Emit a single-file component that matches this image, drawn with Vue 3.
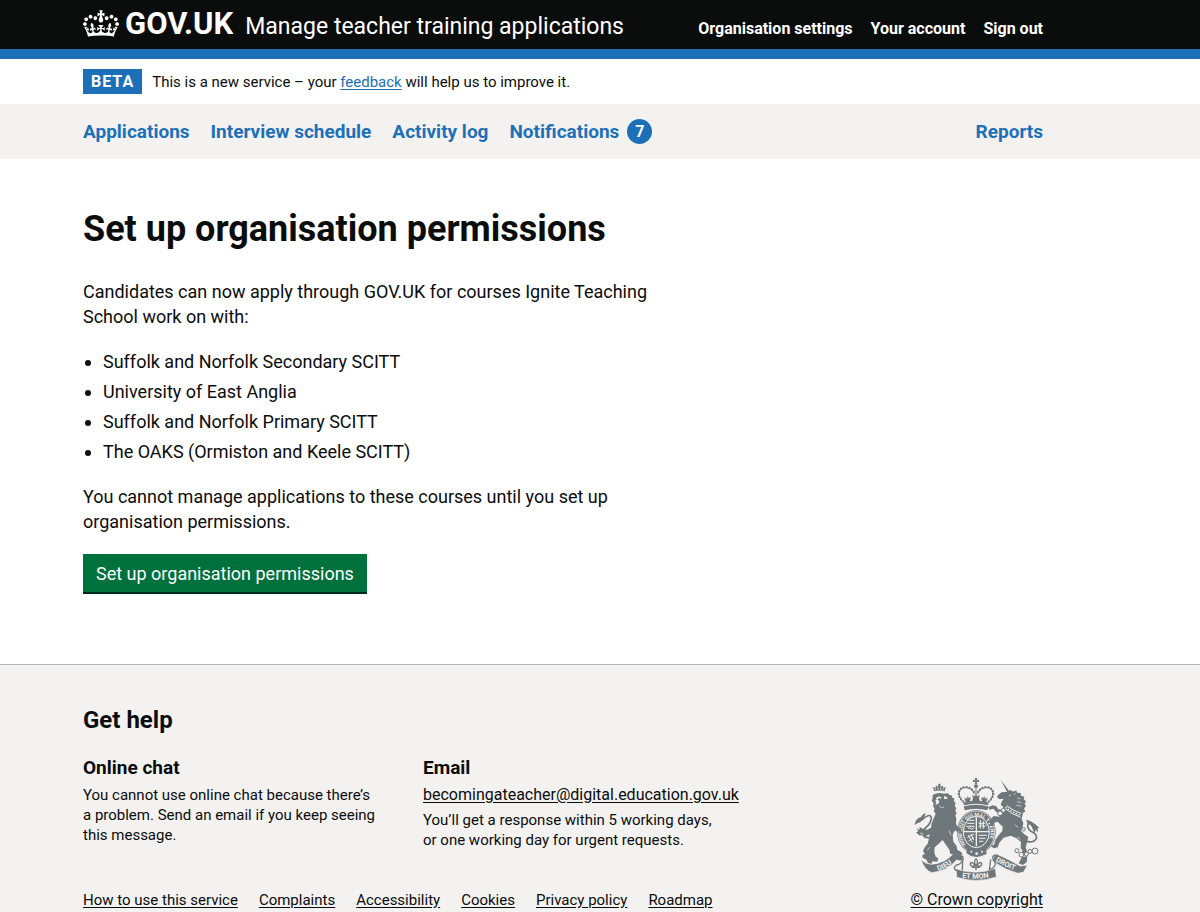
<script setup>
const accountLinks = ['Organisation settings', 'Your account', 'Sign out']
const navLinks = ['Applications', 'Interview schedule', 'Activity log']
const providers = [
  'Suffolk and Norfolk Secondary SCITT',
  'University of East Anglia',
  'Suffolk and Norfolk Primary SCITT',
  'The OAKS (Ormiston and Keele SCITT)'
]
const footerLinks = ['How to use this service', 'Complaints', 'Accessibility', 'Cookies', 'Privacy policy', 'Roadmap']
</script>

<template>
  <header class="header">
    <div class="container header-row">
      <a href="#" class="logo">
        <svg class="crown" viewBox="0 0 132 97" width="36" height="27" aria-hidden="true">
          <path fill="currentColor" fill-rule="evenodd" d="M25 30.2c3.5 1.5 7.7-.2 9.1-3.7 1.5-3.6-.2-7.8-3.9-9.2-3.6-1.4-7.6.3-9.1 3.9-1.4 3.5.3 7.5 3.9 9zM9 39.5c3.6 1.5 7.8-.2 9.2-3.7 1.5-3.6-.2-7.8-3.9-9.1-3.6-1.5-7.6.2-9.1 3.8-1.4 3.5.3 7.5 3.8 9zM4.4 57.2c3.5 1.5 7.7-.2 9.1-3.8 1.5-3.6-.2-7.7-3.9-9.1-3.5-1.5-7.6.3-9.1 3.8-1.4 3.5.3 7.6 3.9 9.1zm38.3-21.4c3.5 1.5 7.7-.2 9.1-3.8 1.5-3.6-.2-7.7-3.9-9.1-3.6-1.5-7.6.3-9.1 3.8-1.3 3.6.4 7.7 3.9 9.1zm64.4-5.6c-3.6 1.5-7.8-.2-9.1-3.7-1.5-3.6.2-7.8 3.8-9.2 3.6-1.4 7.7.3 9.2 3.9 1.3 3.5-.4 7.5-3.9 9zm15.9 9.3c-3.6 1.5-7.7-.2-9.1-3.7-1.5-3.6.2-7.8 3.7-9.1 3.6-1.5 7.7.2 9.2 3.8 1.5 3.5-.3 7.5-3.8 9zm4.7 17.7c-3.6 1.5-7.8-.2-9.2-3.8-1.5-3.6.2-7.7 3.9-9.1 3.6-1.5 7.7.3 9.2 3.8 1.3 3.5-.4 7.6-3.9 9.1zM89.3 35.8c-3.6 1.5-7.8-.2-9.2-3.8-1.4-3.6.2-7.7 3.9-9.1 3.6-1.5 7.7.3 9.2 3.8 1.4 3.6-.3 7.7-3.9 9.1zM69.7 17.7l8.9 4.7V9.3l-8.9 2.8c-.2-.3-.5-.6-.9-.9L72.4 0H59.6l3.5 11.2c-.3.3-.6.5-.9.9l-8.8-2.8v13.1l8.8-4.7c.3.3.6.7.9.9l-5 15.4v.1c-.2.8-.4 1.6-.4 2.4 0 4.1 3.1 7.5 7 8.1h.2c.3 0 .7.1 1 .1.4 0 .7 0 1-.1h.2c4-.6 7.1-4.1 7.1-8.1 0-.8-.1-1.7-.4-2.4V34l-5.1-15.4c.4-.2.7-.6 1-.9zM66 92.8c16.9 0 32.8 1.1 47.1 3.2 4-16.9 8.9-26.7 14-33.5l-9.6-3.4c1 4.9 1.1 7.2 0 10.2-1.5-1.4-3-4.3-4.2-8.7L108.6 76c2.8-2 5-3.2 7.5-3.3-4.4 9.4-10 11.9-13.6 11.2-4.3-.8-6.3-4.6-5.6-7.9 1-4.7 5.7-5.9 8-.5 4.3-8.7-3-11.4-7.6-8.8 7.1-7.2 7.9-13.5 2.1-21.1-8 6.1-8.1 12.3-4.5 20.8-4.7-5.4-12.1-2.5-9.5 6.2 3.4-5.2 7.9-2 7.2 3.1-.6 4.3-6.4 7.8-13.5 7.2-10.3-.9-10.9-8-11.2-13.8 2.5-.5 7.1 1.8 11 7.3L80.2 60c-4.1 4.4-8 5.3-12.3 5.4 1.4-4.4 8-11.6 8-11.6H55.5s6.4 7.2 7.9 11.6c-4.2-.1-8-1-12.3-5.4l1.4 16.4c3.9-5.5 8.5-7.7 10.9-7.3-.3 5.8-.9 12.8-11.1 13.8-7.2.6-12.9-2.9-13.5-7.2-.7-5 3.8-8.3 7.1-3.1 2.7-8.7-4.6-11.6-9.4-6.2 3.7-8.5 3.6-14.7-4.6-20.8-5.8 7.6-5 13.9 2.2 21.1-4.7-2.6-11.9.1-7.7 8.8 2.3-5.5 7.1-4.2 8.1.5.7 3.3-1.3 7.1-5.7 7.9-3.5.7-9-1.8-13.5-11.2 2.5.1 4.7 1.3 7.5 3.3l-4.7-15.4c-1.2 4.4-2.7 7.2-4.3 8.7-1.1-3-.9-5.3 0-10.2l-9.5 3.4c5 6.9 9.9 16.7 14 33.5 14.8-2.1 30.8-3.2 47.7-3.2z" />
        </svg>
        <span>GOV.UK</span>
      </a>
      <a href="#" class="service">Manage teacher training applications</a>
      <nav class="account" aria-label="Account">
        <a v-for="l in accountLinks" :key="l" href="#">{{ l }}</a>
      </nav>
    </div>
  </header>

  <div class="phase">
    <div class="container phase-row">
      <strong class="tag">BETA</strong>
      <span>This is a new service – your <a href="#">feedback</a> will help us to improve it.</span>
    </div>
  </div>

  <nav class="primary" aria-label="Primary">
    <div class="container primary-row">
      <a v-for="l in navLinks" :key="l" href="#">{{ l }}</a>
      <a href="#" class="notify">Notifications <span class="badge">7</span></a>
      <a href="#" class="reports">Reports</a>
    </div>
  </nav>

  <main class="main">
    <div class="container">
      <div class="content">
        <h1>Set up organisation permissions</h1>
        <p>Candidates can now apply through GOV.UK for courses Ignite Teaching School work on with:</p>
        <ul>
          <li v-for="p in providers" :key="p">{{ p }}</li>
        </ul>
        <p>You cannot manage applications to these courses until you set up organisation permissions.</p>
        <button type="button" class="button">Set up organisation permissions</button>
      </div>
    </div>
  </main>

  <footer class="footer">
    <div class="container footer-row">
      <div>
        <h2>Get help</h2>
        <div class="help">
          <section>
            <h3>Online chat</h3>
            <p>You cannot use online chat because there’s a problem. Send an email if you keep seeing this message.</p>
          </section>
          <section>
            <h3>Email</h3>
            <p><a href="#" class="email">becomingateacher@digital.education.gov.uk</a></p>
            <p>You’ll get a response within 5 working days, or one working day for urgent requests.</p>
          </section>
        </div>
        <nav class="meta" aria-label="Support links">
          <a v-for="l in footerLinks" :key="l" href="#">{{ l }}</a>
        </nav>
      </div>
      <a href="#" class="copyright">
        <svg class="crest" viewBox="42 36 378 312" width="126" height="104" aria-hidden="true">
          <!-- imperial crown -->
          <g class="fill">
            <path d="M224 39h8l-2 7 7-2v8l-7-2 2 8h-8l2-8-7 2v-8l7 2z" />
            <circle cx="228" cy="64" r="6" />
            <path d="M190 113q38-12 76 0l-2 8q-36-10-72 0zM191 124q37-9 74 0l-3 12q-34-10-68 0z" />
            <path d="M228 86l4 8 8-4-3 10 3 9h-24l3-9-3-10 8 4zM203 92l3 7 7-2-4 13-12 2-4-14 8 3zM253 92l-3 7-7-2 4 13 12 2 4-14-8 3z" />
          </g>
          <path class="line" stroke-width="3" d="M192 112C166 88 180 66 199 68q18 2 25 20M264 112C290 88 276 66 257 68q-18 2-25 20M228 70v17" />
          <path class="dots" d="M190 110C164 88 178 64 199 66q18 2 25 20M266 110C292 88 278 64 257 66q-18 2-25 20" />

          <!-- garter and shield -->
          <ellipse class="fill" cx="229" cy="201" rx="58" ry="66" />
          <ellipse class="light-line" cx="229" cy="201" rx="55" ry="63" stroke-width="2" />
          <ellipse class="light-line" cx="229" cy="201" rx="39" ry="47" stroke-width="3" />
          <path id="garter" fill="none" d="M198 240A43 51 0 1 1 260 240" />
          <text class="garter"><textPath href="#garter" startOffset="2">HONI SOIT QUI MAL Y PENSE</textPath></text>
          <path class="light-line" stroke-width="4" d="M229 157v87M191 200h76" />
          <path class="light-line" stroke-width="3" d="M202 175h21M199 184h24M207 166h16M204 191l5-3 6 5 7-5M236 175h20M236 185l8-5 8 6 8-7M241 165v26M250 168v23M236 211h24M237 220h20M237 229h13M205 210l12 22M213 207l8 18M222 207l-20 10M221 217l-15 11" />
          <path class="fill" d="M202 244l27 18 28-17 3 22-18 7-13 2-16-3-14-9z" />
          <circle class="light" cx="214" cy="260" r="3" />
          <circle class="light" cx="230" cy="266" r="4" />
          <circle class="light" cx="246" cy="260" r="3" />

          <!-- motto ribbon -->
          <g class="ribbon">
            <path d="M63 283q12 14 30 15 40-2 67-32 22-2 32 9l-7 14-15-4q-29 34-75 38-22-8-32-40z" />
            <path d="M288 266q42 18 72 37l22-2-11 20-17 4q-38-10-78-38z" />
            <path d="M169 312q59 20 117-2l3 26q-59 20-119 1z" />
          </g>

          <!-- lion -->
          <g class="fill">
            <path d="M103 79l-5-13 8 3 2-7 6 3 1-9h6l1 9 7-3 1 7 7-4-3 14q-15-5-31 0z" />
            <path d="M98 90q16-9 34-4l12-1 4 5 7 1 1 6 7 4-1 8 5 6-3 7 5 8-3 7 4 8-4 6 3 10-1 17 9 10 6 3 1 12-8-6-4 5-6-6-5 6-3 8 2 20 10 13 2 12 11 5 5 9-22 1-15-4-3-12-10-14-10-15-10 10-14 12-1 15 4 13 8 5-3 10-15-1-2 7-11-2-6-11-10-4-1-9 8-3-6-8 4-11 10-12 4-16 2-12-12 5-18-1-11-10 7-3-5-9 10 4-2-9 11 7 12 2 12-6 2-14 12-28-6-8 3-7-5-8 2-8-6-8 3-7z" />
            <path d="M44 180q2-20 19-24 4-9 14-12-2 12-9 18l-7 10q-9 2-17 8z" />
          </g>
          <path class="line" stroke-width="5" d="M64 166q30-27 30-4-4 17-18 27-16 13-5 24 8 7 22 4" />
          <path class="light" d="M108 98l9-4 8 4-3 3-5-2-4 4 5 6-3 7-9 4 3-8-4-5 5-2zM133 93l7 2 3 8-6-2-5 2z" />
          <path class="light-line" stroke-width="2" d="M117 121l7 8 8-3M106 70v6M114 67v7M122 67v7M129 70v6M90 246l-8 9M147 196l6 15M60 204l10 3M58 213l11-2" />

          <!-- unicorn -->
          <g class="fill">
            <path d="M302 44l28 37-7 3z" />
            <path d="M326 80l5-6 8 6 10-4 2 7 11 1 1 8 10 3-2 8 7 6-4 7 4 8-6 6 4 10-7 3-4 20 5 10-2 13-5 11 9 10 13 9-3 12-5 20 4 9-8 14-9-2 3-13-5-6 1-19-15-12-16-7-21 6-12 14-6 15-11 3-10-6 11-6 3-14 12-16 9-10 1-13-15-15-10 3-4 12-8-4-2-16 12-12 17 2 4-8-14-7-8-9-11 3-5-7 13-6 12 3 6 9 15 2-1-10-7-6 4-10 5-8-12 2-8-6 3-7 11-8z" />
            <path d="M404 176l15 13-6-1 1 14-7-8-3 12-7-16-4-9-11-7-4-10 13 4z" />
          </g>
          <path class="line" stroke-width="5" d="M407 190q-26-23-24-8 1 14 15 20 14 7 11 18-7 14-26 10-7-1-11-6" />
          <path class="light-line" stroke-width="3" d="M316 131q19 16 46 26M320 122q19 15 44 24" />
          <path class="dots light" d="M318 127q19 15 45 25" />
          <path class="light-line" stroke-width="2" d="M327 92l6-1M352 99l10 3M351 110l13 3M349 120l15 4M342 90l5-6M345 178l9 10M351 216l10 7" />
          <g class="rings">
            <circle cx="300" cy="145" r="7" />
            <circle cx="310" cy="136" r="6" />
            <circle cx="351" cy="257" r="6" />
            <circle cx="364" cy="269" r="7" />
            <circle cx="379" cy="267" r="6" />
            <circle cx="390" cy="259" r="6" />
            <circle cx="405" cy="258" r="9" />
            <circle cx="371" cy="193" r="5" />
          </g>
          <path class="fill" d="M366 276l16-2-2 18-12 8-12-5z" />

          <path id="dieu" fill="none" d="M115 318Q146 307 176 279" />
          <path id="mon" fill="none" d="M180 336Q229 347 280 335" />
          <path id="droit" fill="none" d="M284 288Q318 307 356 321" />
          <text class="motto"><textPath href="#dieu">DIEU</textPath></text>
          <text class="motto"><textPath href="#mon" startOffset="6">ET MON</textPath></text>
          <text class="motto"><textPath href="#droit" startOffset="2">DROIT</textPath></text>
          <path class="line" stroke-width="4" d="M183 274q12 5 3 16-11 11-17 10-14 12 5 18M287 270q-13 4-7 12 9 9 4 22-6 8-18 10M188 284l-1 32M272 283l-4 33" />

          <!-- floral badge -->
          <path class="line" stroke-width="4" d="M228 281q-9 11 0 22 9-11 0-22M225 304q-16 2-14-9 7-8 14 9M231 304q16 2 14-9-7-8-14 9M216 307h24M228 307v9" />
        </svg>
        <span>© Crown copyright</span>
      </a>
    </div>
  </footer>
</template>

<style>
body {
  margin: 0;
  background: #f3f2f1;
}
</style>

<style scoped>
.header, .phase, .primary, .main, .footer {
  padding: 0 89px 0 15px;
  font-family: Roboto, "Liberation Sans", sans-serif;
  font-size: 15px;
  line-height: 20px;
  color: #0b0c0c;
}
.container {
  max-width: 960px;
  margin: 0 auto;
}
a {
  color: inherit;
  text-underline-offset: 2px;
}
h1, h2, h3, p, ul {
  margin: 0;
}
.header {
  background: #0b0c0c;
  border-bottom: 10px solid #1d70b8;
  color: #fff;
}
.header-row {
  display: flex;
  align-items: baseline;
  padding: 8px 0 7px;
}
.header a {
  text-decoration: none;
}
.logo {
  display: flex;
  align-items: baseline;
  gap: 6px;
  margin-right: 12px;
  font-size: 31px;
  line-height: 32px;
  font-weight: 700;
}
.crown {
  align-self: flex-start;
  margin-top: 2px;
}
.service {
  font-size: 23px;
  line-height: 30px;
}
.account {
  display: flex;
  gap: 18px;
  margin-left: auto;
  font-size: 16px;
  font-weight: 700;
}
.phase {
  background: #fff;
}
.phase-row {
  display: flex;
  align-items: center;
  gap: 10px;
  padding: 10px 0;
}
.phase a {
  color: #1d70b8;
}
.tag {
  padding: 0 8px;
  background: #1d70b8;
  color: #fff;
  font-size: 16px;
  line-height: 25px;
  letter-spacing: 1px;
}
.primary-row {
  display: flex;
  align-items: center;
  gap: 21px;
  height: 55px;
  font-size: 19px;
  line-height: 25px;
  font-weight: 700;
}
.primary a {
  color: #1d70b8;
  text-decoration: none;
}
.notify {
  display: flex;
  align-items: center;
  gap: 8px;
}
.badge {
  width: 25px;
  border-radius: 50%;
  background: #1d70b8;
  color: #fff;
  font-size: 16px;
  text-align: center;
}
.primary .reports {
  margin-left: auto;
}
.main {
  background: #fff;
  font-size: 18px;
  line-height: 25px;
}
.content {
  max-width: 600px;
  padding: 50px 0 70px;
}
h1 {
  margin-bottom: 30px;
  font-size: 36px;
  line-height: 40px;
}
.content p, .content ul {
  margin-bottom: 20px;
}
ul {
  padding-left: 20px;
}
li + li {
  margin-top: 5px;
}
.button {
  display: block;
  height: 40px;
  padding: 0 13px 2px;
  border: 0;
  border-radius: 0;
  background: #00703c;
  box-shadow: inset 0 -2px 0 #002d18;
  color: #fff;
  font: inherit;
}
.primary, .footer {
  background: #f3f2f1;
}
.footer {
  border-top: 1px solid #b1b4b6;
}
.footer-row {
  display: flex;
  align-items: flex-end;
  justify-content: space-between;
  padding: 40px 0 2px;
}
h2 {
  margin-bottom: 20px;
  font-size: 24px;
  line-height: 30px;
}
h3 {
  margin-bottom: 5px;
  font-size: 19px;
  line-height: 25px;
}
.help {
  display: grid;
  grid-template-columns: 296px 296px;
  gap: 44px;
  margin-bottom: 40px;
}
.help p + p {
  margin-top: 5px;
}
.email {
  font-size: 16px;
  white-space: nowrap;
}
.meta {
  display: flex;
  gap: 21px;
}
.copyright {
  display: flex;
  flex-direction: column;
  align-items: center;
  gap: 9px;
  font-size: 16px;
}
.crest {
  overflow: visible;
}
.fill {
  fill: #6f777b;
}
.ribbon {
  fill: #6f777b;
  stroke: #f3f2f1;
  stroke-width: 2;
}
.line {
  fill: none;
  stroke: #6f777b;
}
.light {
  fill: #f3f2f1;
}
.light-line {
  fill: none;
  stroke: #f3f2f1;
}
.dots {
  fill: none;
  stroke: #6f777b;
  stroke-linecap: round;
  stroke-width: 6;
  stroke-dasharray: 1 8;
}
.dots.light {
  stroke: #f3f2f1;
  stroke-width: 4;
}
.rings {
  fill: #f3f2f1;
  stroke: #6f777b;
  stroke-width: 3;
}
.garter, .motto {
  fill: #f3f2f1;
  font-weight: 700;
}
.garter {
  font-size: 15px;
}
.motto {
  font-size: 22px;
}
</style>
